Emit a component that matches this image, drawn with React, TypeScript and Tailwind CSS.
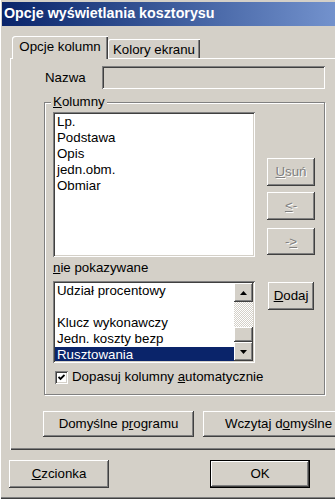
import React from 'react';

const raised =
  'shadow-[inset_-1px_-1px_#404040,inset_1px_1px_#ffffff,inset_-2px_-2px_#808080,inset_2px_2px_#d4d0c8]';
const sunken =
  'shadow-[inset_1px_1px_#808080,inset_-1px_-1px_#ffffff,inset_2px_2px_#404040,inset_-2px_-2px_#d4d0c8]';

const Btn: React.FC<{ className?: string; disabled?: boolean; children: React.ReactNode }> = ({
  className = '',
  disabled,
  children,
}) => (
  <div
    className={`flex items-center justify-center whitespace-nowrap bg-[#d4d0c8] ${raised} ${
      disabled ? 'text-[#808080] [text-shadow:1px_1px_#ffffff]' : 'text-black'
    } ${className}`}
  >
    <span>{children}</span>
  </div>
);

const Arrow: React.FC<{ down?: boolean }> = ({ down }) => (
  <svg width="7" height="4" viewBox="0 0 7 4">
    {down ? <path d="M0 0h7L3.5 4z" fill="#000" /> : <path d="M3.5 0L7 4H0z" fill="#000" />}
  </svg>
);

export default function App() {
  const visible = ['Lp.', 'Podstawa', 'Opis', 'jedn.obm.', 'Obmiar'];

  return (
    <div className="w-[335px] h-[499px] overflow-hidden bg-[#d4d0c8] text-black text-[13.3px] font-['Liberation_Sans',Arial,sans-serif] shadow-[inset_1px_0_#ffffff,inset_0_-1px_#404040,inset_0_-2px_#808080]">
      {/* Title bar */}
      <div className="pl-[2px] pt-[2px]">
        <div className="h-[24px] bg-linear-to-r from-[#0a246a] to-[#7392cd] pl-[2px] flex items-center text-white font-bold text-[14.3px]">
          Opcje wyświetlania kosztorysu
        </div>
      </div>

      {/* Tabs */}
      <div className="mt-[10px] pl-[12px] flex items-end h-[22px]">
        <div className="relative z-10 -mb-px h-[23px] w-[96px] bg-[#d4d0c8] rounded-tl-[3px] shadow-[inset_1px_1px_#ffffff,inset_-1px_0_#404040,inset_-2px_0_#808080] flex items-center justify-center pb-[1px]">
          Opcje kolumn
        </div>
        <div className="h-[19px] w-[92px] rounded-tl-[2px] shadow-[inset_1px_1px_#ffffff,inset_-1px_0_#404040,inset_-2px_0_#808080] flex items-center justify-center pt-[2px]">
          Kolory ekranu
        </div>
      </div>

      {/* Tab panel */}
      <div className="ml-[10px] w-[340px] h-[392px] shadow-[inset_1px_1px_#ffffff,inset_0_-1px_#404040,inset_0_-2px_#808080]">
        <div className="pt-[8px] flex items-center">
          <span className="ml-[35px] w-[57px]">Nazwa</span>
          <div className={`w-[223px] h-[23px] bg-[#d4d0c8] ${sunken}`} />
        </div>

        {/* Kolumny group */}
        <div className="relative mt-[13px] ml-[34px] w-[281px] h-[293px] border border-[#808080] shadow-[inset_1px_1px_#ffffff,1px_1px_#ffffff]">
          <span className="absolute -top-[9px] left-[6px] px-[2px] bg-[#d4d0c8] leading-[16px]">
            <u>K</u>olumny
          </span>

          <div className="pl-[8px] pt-[9px] flex">
            <div className="w-[202px] flex flex-col">
              <div className={`h-[145px] bg-white p-[2px] ${sunken}`}>
                {visible.map((v) => (
                  <div key={v} className="pl-[2px] leading-[16px] h-[16px]">
                    {v}
                  </div>
                ))}
              </div>

              <div className="mt-[3px] leading-[16px] h-[16px]">
                <u>n</u>ie pokazywane
              </div>

              <div className={`mt-[5px] h-[82px] bg-white p-[2px] ${sunken}`}>
                <div className="flex h-full">
                  <div className="flex-1 overflow-hidden">
                    <div className="pl-[2px] leading-[16px] h-[16px]">Udział procentowy</div>
                    <div className="h-[16px]" />
                    <div className="pl-[2px] leading-[16px] h-[16px]">Klucz wykonawczy</div>
                    <div className="pl-[2px] leading-[16px] h-[16px]">Jedn. koszty bezp</div>
                    <div className="pl-[2px] leading-[16px] h-[16px] bg-[#0a246a] text-white">Rusztowania</div>
                  </div>
                  <div className="w-[19px] flex flex-col">
                    <div className={`h-[19px] flex items-center justify-center bg-[#d4d0c8] ${raised}`}>
                      <Arrow />
                    </div>
                    <div className="flex-1 bg-[repeating-conic-gradient(#d4d0c8_0%_25%,#ffffff_0%_50%)] bg-[length:2px_2px]" />
                    <div className={`h-[15px] bg-[#d4d0c8] ${raised}`} />
                    <div className={`h-[19px] flex items-center justify-center bg-[#d4d0c8] ${raised}`}>
                      <Arrow down />
                    </div>
                  </div>
                </div>
              </div>

              <div className="mt-[6px] h-[16px] flex items-center whitespace-nowrap">
                <div className={`shrink-0 ml-[2px] w-[13px] h-[13px] bg-white flex items-center justify-center ${sunken}`}>
                  <svg width="7" height="7" viewBox="0 0 7 7">
                    <path d="M0.5 3l2 2 4-4" stroke="#000" strokeWidth="1.8" fill="none" />
                  </svg>
                </div>
                <span className="ml-[4px]">
                  Dopasuj kolumny <u>a</u>utomatycznie
                </span>
              </div>
            </div>

            <div className="ml-[12px] w-[48px] flex flex-col">
              <Btn disabled className="mt-[46px] h-[28px]">
                <u>U</u>suń
              </Btn>
              <Btn disabled className="mt-[6px] h-[28px]">
                <u>&lt;</u>-
              </Btn>
              <Btn disabled className="mt-[8px] h-[27px]">
                -<u>&gt;</u>
              </Btn>
              <Btn className="mt-[27px] ml-[1px] w-[46px] h-[28px]">
                <u>D</u>odaj
              </Btn>
            </div>
          </div>
        </div>

        <div className="mt-[16px] ml-[33px] flex gap-[9px]">
          <Btn className="w-[151px] h-[26px] shrink-0">
            Domyślne p<u>r</u>ogramu
          </Btn>
          <Btn className="w-[151px] h-[26px] shrink-0">
            Wczytaj d<u>o</u>myślne
          </Btn>
        </div>
      </div>

      {/* Bottom buttons */}
      <div className="mt-[10px] flex">
        <Btn className="ml-[9px] w-[100px] h-[28px]">
          <u>C</u>zcionka
        </Btn>
        <div className="ml-[101px] w-[100px] h-[28px] border border-black">
          <Btn className="w-full h-full">OK</Btn>
        </div>
      </div>
    </div>
  );
}
